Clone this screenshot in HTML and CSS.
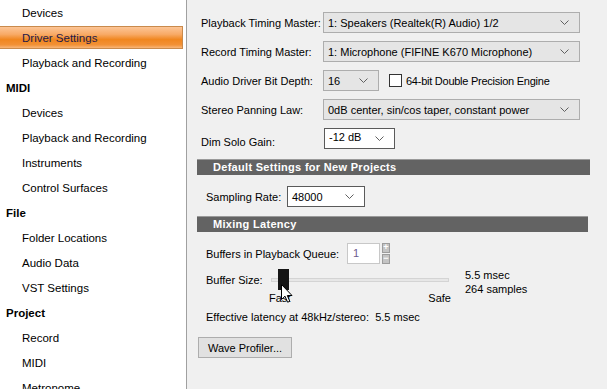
FILE: index.html
```html
<!DOCTYPE html>
<html lang="en">

<head>
    <meta charset="UTF-8">
    <meta name="viewport" content="width=device-width, initial-scale=1.0">
    <title>Preferences - Audio Driver Settings</title>
    <link rel="stylesheet" href="styles.css">
</head>

<body>
    <div class="app">
        <nav class="sidebar">
            <div class="nav-item child">Devices</div>
            <div class="nav-item child selected">Driver Settings</div>
            <div class="nav-item child">Playback and Recording</div>
            <div class="nav-item group">MIDI</div>
            <div class="nav-item child">Devices</div>
            <div class="nav-item child">Playback and Recording</div>
            <div class="nav-item child">Instruments</div>
            <div class="nav-item child">Control Surfaces</div>
            <div class="nav-item group">File</div>
            <div class="nav-item child">Folder Locations</div>
            <div class="nav-item child">Audio Data</div>
            <div class="nav-item child">VST Settings</div>
            <div class="nav-item group">Project</div>
            <div class="nav-item child">Record</div>
            <div class="nav-item child">MIDI</div>
            <div class="nav-item child">Metronome</div>
        </nav>

        <main class="panel">
            <section class="timing">
                <div class="field-row">
                    <span class="field-label">Playback Timing Master:</span>
                    <div class="combo combo-wide">
                        <span>1: Speakers (Realtek(R) Audio) 1/2</span>
                        <svg class="chevron" width="9" height="5" viewBox="0 0 9 5"><polyline points="0.5,0.5 4.5,4.5 8.5,0.5" /></svg>
                    </div>
                </div>
                <div class="field-row">
                    <span class="field-label">Record Timing Master:</span>
                    <div class="combo combo-wide">
                        <span>1: Microphone (FIFINE K670 Microphone)</span>
                        <svg class="chevron" width="9" height="5" viewBox="0 0 9 5"><polyline points="0.5,0.5 4.5,4.5 8.5,0.5" /></svg>
                    </div>
                </div>
                <div class="field-row">
                    <span class="field-label">Audio Driver Bit Depth:</span>
                    <div class="combo combo-bits">
                        <span>16</span>
                        <svg class="chevron" width="9" height="5" viewBox="0 0 9 5"><polyline points="0.5,0.5 4.5,4.5 8.5,0.5" /></svg>
                    </div>
                    <label class="check">
                        <span class="check-box"></span>
                        <span class="check-text">64-bit Double Precision Engine</span>
                    </label>
                </div>
                <div class="field-row">
                    <span class="field-label">Stereo Panning Law:</span>
                    <div class="combo combo-wide">
                        <span>0dB center, sin/cos taper, constant power</span>
                        <svg class="chevron" width="9" height="5" viewBox="0 0 9 5"><polyline points="0.5,0.5 4.5,4.5 8.5,0.5" /></svg>
                    </div>
                </div>
                <div class="field-row">
                    <span class="field-label label-low">Dim Solo Gain:</span>
                    <div class="combo combo-edit combo-gain">
                        <span class="edit-text">-12 dB</span>
                        <svg class="chevron" width="9" height="5" viewBox="0 0 9 5"><polyline points="0.5,0.5 4.5,4.5 8.5,0.5" /></svg>
                    </div>
                </div>
            </section>

            <h2 class="section-bar">Default Settings for New Projects</h2>
            <div class="sub-row">
                <span class="sub-label rate-label">Sampling Rate:</span>
                <div class="combo combo-edit combo-rate">
                    <span>48000</span>
                    <svg class="chevron" width="9" height="5" viewBox="0 0 9 5"><polyline points="0.5,0.5 4.5,4.5 8.5,0.5" /></svg>
                </div>
            </div>

            <h2 class="section-bar bar-narrow">Mixing Latency</h2>
            <div class="sub-row">
                <span class="sub-label queue-label">Buffers in Playback Queue:</span>
                <div class="number-input">1</div>
                <div class="spin">
                    <span class="spin-btn">+</span>
                    <span class="spin-btn">&minus;</span>
                </div>
            </div>

            <div class="buffer-row">
                <span class="sub-label buffer-label">Buffer Size:</span>
                <div class="slider">
                    <div class="slider-track-area">
                        <div class="slider-track"></div>
                        <div class="slider-thumb"></div>
                        <svg class="cursor" width="12" height="19" viewBox="0 0 12 19">
                            <path d="M0.5,0.5 L0.5,15.5 L4,12.2 L6.6,18.2 L8.8,17.3 L6.3,11.5 L11,11.5 Z" />
                        </svg>
                    </div>
                    <div class="slider-ticks">
                        <span>Fast</span>
                        <span>Safe</span>
                    </div>
                </div>
                <div class="buffer-values">
                    <div>5.5 msec</div>
                    <div>264 samples</div>
                </div>
            </div>

            <p class="latency">Effective latency at 48kHz/stereo:&nbsp; 5.5 msec</p>

            <button class="profiler">Wave Profiler...</button>
        </main>
    </div>
</body>

</html>
```

FILE: styles.css
```css
* {
    box-sizing: border-box;
}

html,
body {
    margin: 0;
    height: 100%;
    overflow: hidden;
}

body {
    background: #f0f0f0;
    font-family: "Liberation Sans", Arial, sans-serif;
    font-size: 11px;
    color: #000;
}

.app {
    display: flex;
    height: 100%;
}

/* tree on the left */

.sidebar {
    width: 187px;
    flex: none;
    background: #fff;
    border-right: 1px solid #a0a0a0;
    padding-right: 3px;
    overflow: hidden;
    font-size: 11.5px;
}

.nav-item {
    height: 25px;
    padding-top: 1px;
    line-height: 25px;
    white-space: nowrap;
    color: #000;
}

.nav-item.group {
    padding-left: 6px;
    font-weight: bold;
}

.nav-item.child {
    padding-left: 22px;
}

.nav-item.selected {
    margin: 1px 0;
    height: 23px;
    padding-top: 0;
    line-height: 23px;
    color: #1d1a4a;
    border: 1px solid #c98a4c;
    border-left: none;
    background: linear-gradient(to bottom, #fcc596 0%, #f8aa66 35%, #f0861f 60%, #f29136 85%, #f8b679 100%);
}

/* settings panel */

.panel {
    flex: 1;
    padding: 12px 0 0 10px;
    min-width: 0;
}

.timing {
    padding-left: 4px;
}

.field-row {
    display: flex;
    align-items: center;
    height: 21px;
    margin-bottom: 8px;
}

.field-label {
    width: 122px;
    flex: none;
    white-space: nowrap;
}

.label-low {
    padding-top: 6px;
}

.combo {
    position: relative;
    display: flex;
    align-items: center;
    justify-content: space-between;
    height: 21px;
    padding: 0 10px 0 4px;
    background: #e5e5e5;
    border: 1px solid #adadad;
    white-space: nowrap;
}

.combo-wide {
    width: 257px;
}

.combo-bits {
    width: 56px;
}

.combo-edit {
    background: #fff;
    border-color: #5a5a5a;
}

.combo-gain {
    width: 71px;
    margin-left: 1px;
    align-items: flex-start;
    padding-top: 2px;
}

.combo-gain .chevron {
    margin-top: 5px;
}

.combo-rate {
    width: 78px;
}

.chevron {
    fill: none;
    stroke: #606060;
    stroke-width: 1;
}

.check {
    display: flex;
    align-items: center;
    gap: 4px;
    margin-left: 10px;
}

.check-box {
    width: 13px;
    height: 13px;
    background: #fff;
    border: 1px solid #333;
}

.check-text {
    letter-spacing: -0.25px;
}

.section-bar {
    margin: 10px 0 0;
    width: 393px;
    height: 16px;
    padding-left: 16px;
    background: #636363;
    border-top: 1px solid #9a9a9a;
    color: #fff;
    font-size: 11px;
    font-weight: bold;
    line-height: 14px;
    letter-spacing: 0.3px;
}

.bar-narrow {
    width: 391px;
    margin-top: 9px;
}

.sub-row {
    display: flex;
    align-items: center;
    height: 21px;
    margin-top: 11px;
    padding-left: 9px;
}

.rate-label {
    width: 81px;
}

.queue-label {
    width: 141px;
}

.number-input {
    width: 33px;
    height: 21px;
    padding: 3px 0 0 5px;
    background: #fff;
    border: 1px solid #c8c8c8;
    color: #6c5b8c;
}

.spin {
    display: flex;
    flex-direction: column;
    gap: 1px;
    margin-left: 2px;
    height: 21px;
}

.spin-btn {
    width: 8px;
    height: 10px;
    background: #c4c4c4;
    border: 1px solid #9c9c9c;
    color: #fff;
    font-size: 9px;
    font-weight: bold;
    line-height: 7px;
    text-align: center;
}

/* buffer size slider */

.buffer-row {
    display: flex;
    margin-top: 5px;
    padding-left: 9px;
}

.buffer-label {
    width: 65px;
    padding-top: 5px;
}

.slider {
    width: 178px;
}

.slider-track-area {
    position: relative;
    height: 22px;
}

.slider-track {
    position: absolute;
    left: 0;
    right: 0;
    top: 9px;
    height: 4px;
    background: #e7e7e7;
    border: 1px solid #d4d4d4;
}

.slider-thumb {
    position: absolute;
    left: 7px;
    top: 0;
    width: 11px;
    height: 21px;
    background: #151515;
}

.cursor {
    position: absolute;
    left: 10px;
    top: 15px;
    fill: #fff;
    stroke: #000;
    stroke-width: 1;
}

.slider-ticks {
    display: flex;
    justify-content: space-between;
    margin: 0 -2px 0 -2px;
    line-height: 14px;
}

.buffer-values {
    margin-left: 16px;
    line-height: 14px;
    margin-top: -1px;
}

.latency {
    margin: 5px 0 0;
    padding-left: 9px;
    line-height: 14px;
}

.profiler {
    display: block;
    margin: 13px 0 0 1px;
    width: 94px;
    height: 21px;
    padding: 0;
    background: #e1e1e1;
    border: 1px solid #adadad;
    font-family: inherit;
    font-size: 11px;
    color: #000;
}
```
